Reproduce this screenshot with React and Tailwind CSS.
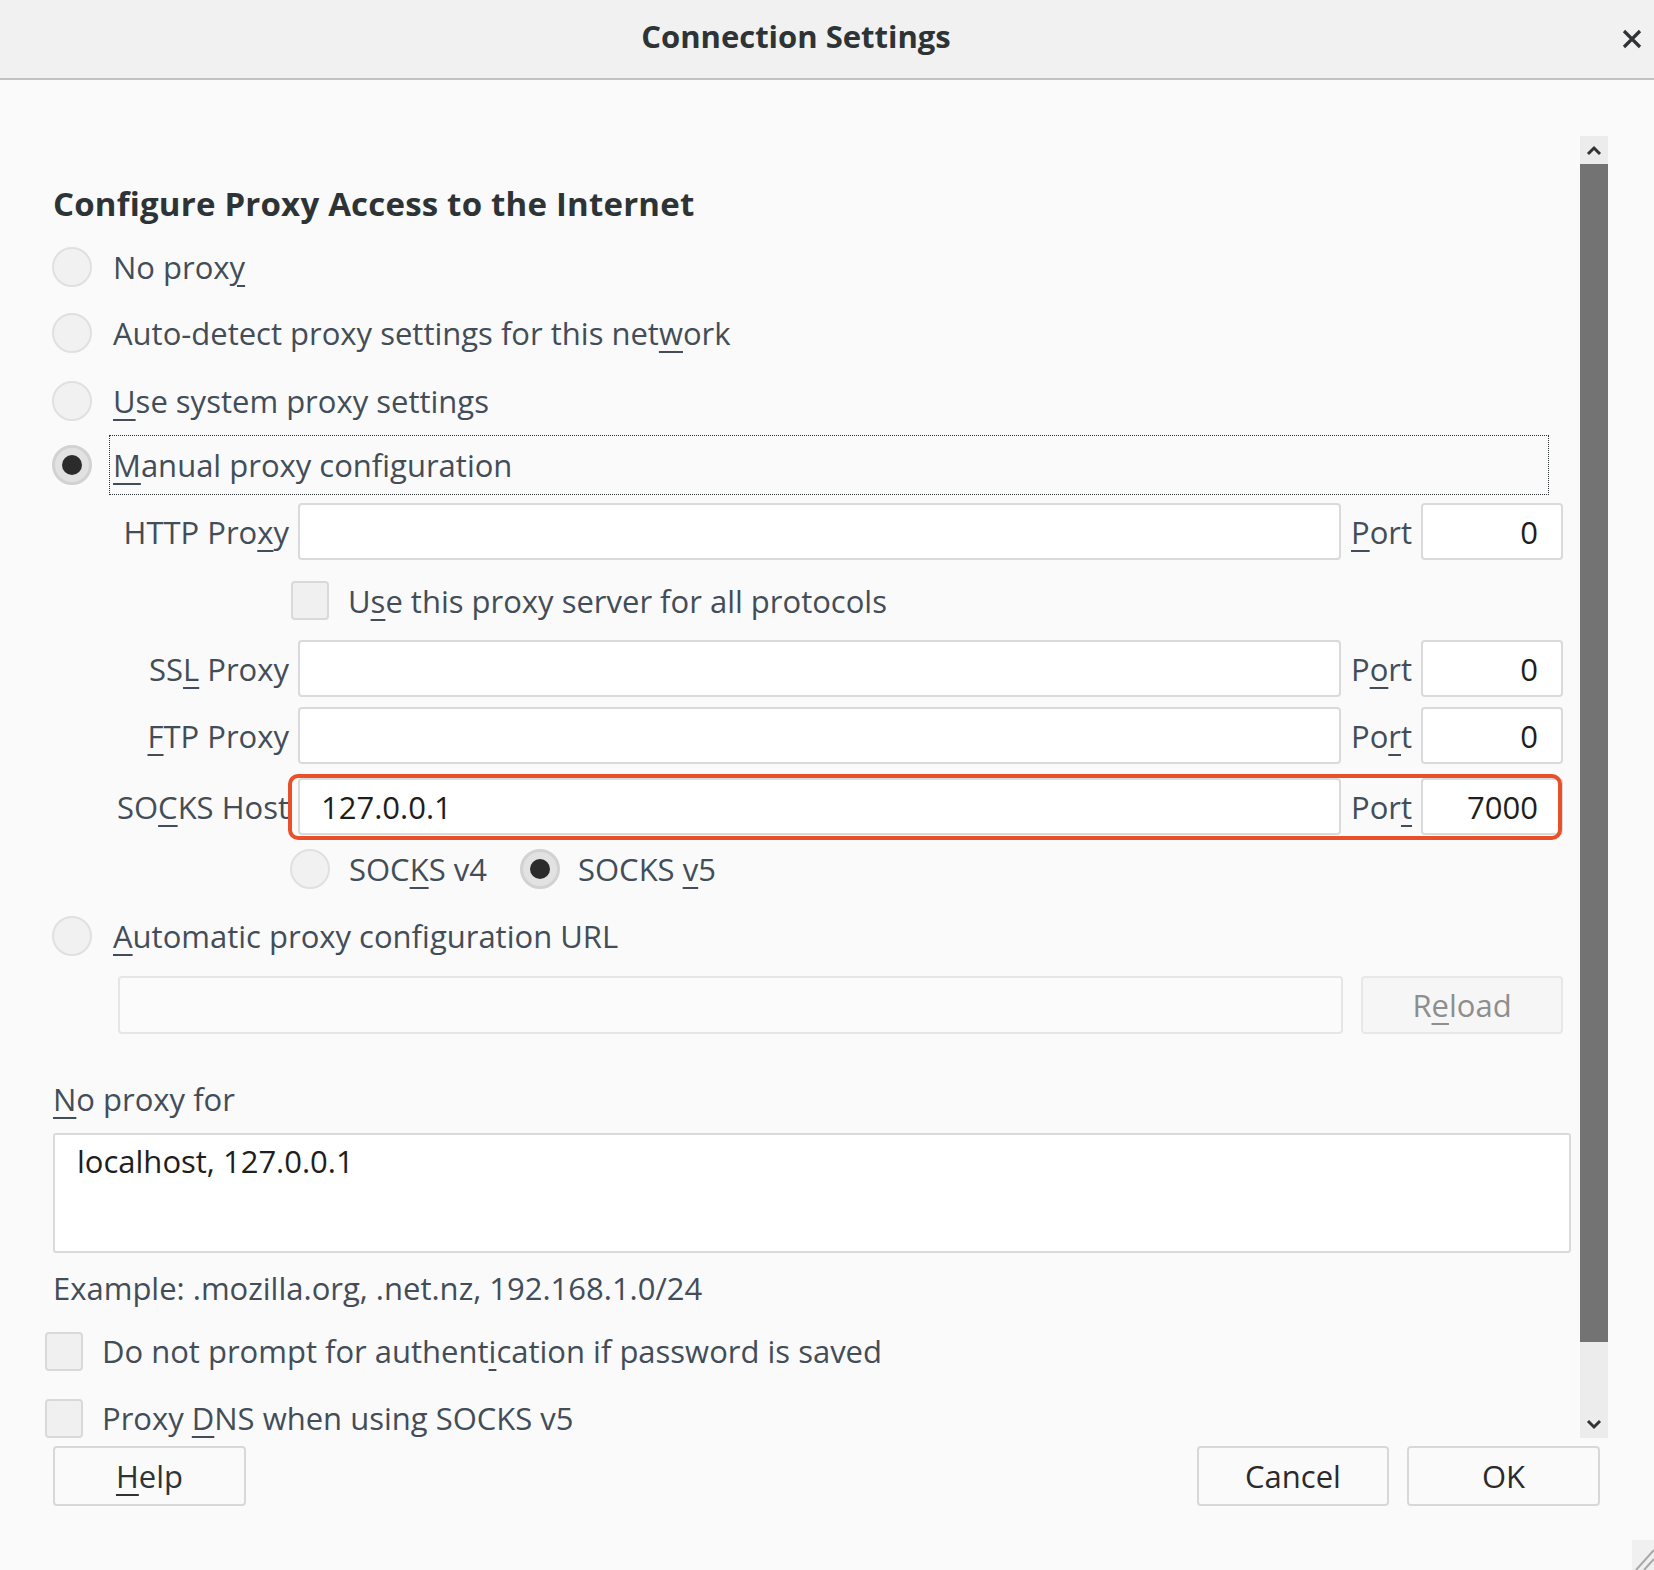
import React from 'react';

// accesskey underline
const U = ({ children }) => (
    <u className="underline decoration-2 underline-offset-[6px]">{children}</u>
);

function Radio({ checked }) {
    if (checked) {
        return (
            <span className="flex h-[40px] w-[40px] shrink-0 items-center justify-center rounded-full border-[3px] border-[#d2d2d2] bg-[#e2e2e2]">
                <span className="h-[20px] w-[20px] rounded-full bg-[#2b2b2b]" />
            </span>
        );
    }
    return <span className="h-[40px] w-[40px] shrink-0 rounded-full border-2 border-[#e0e0e0] bg-[#f1f1f1]" />;
}

function Checkbox() {
    return <span className="h-[39px] w-[38px] shrink-0 rounded-[4px] border-2 border-[#d9d9d9] bg-[#f0f0f0]" />;
}

function RadioRow({ checked, children, className = '' }) {
    return (
        <div className={`flex h-[40px] items-center pl-[52px] ${className}`}>
            <Radio checked={checked} />
            <span className="ml-[21px] whitespace-nowrap">{children}</span>
        </div>
    );
}

function ProxyRow({ label, host, port, portLabel, className = '', children }) {
    return (
        <div className={`relative flex h-[58px] items-stretch ${className}`}>
            <span className="flex w-[289px] items-center justify-end whitespace-nowrap">
                <span>{label}</span>
            </span>
            <span className="ml-[9px] flex w-[1043px] items-center rounded-[4px] border-2 border-[#dadadc] bg-white pl-[21px] text-[#1e1e1e]">
                {host}
            </span>
            <span className="flex w-[80px] items-center pl-[10px]">
                <span>{portLabel}</span>
            </span>
            <span className="flex w-[142px] items-center justify-end rounded-[4px] border-2 border-[#dadadc] bg-white pr-[23px] text-[#1e1e1e]">
                {port}
            </span>
            {children}
        </div>
    );
}

function Chevron({ up }) {
    return (
        <svg width="16" height="12" viewBox="0 0 16 12">
            <path
                d={up ? 'M2 10 L8 4 L14 10' : 'M2 3 L8 9 L14 3'}
                fill="none"
                stroke="#333"
                strokeWidth="3"
            />
        </svg>
    );
}

function Button({ children, className = '', textClass = 'text-[#2e3436]' }) {
    return (
        <div className={`flex h-[60px] items-center justify-center rounded-[4px] border-2 border-[#d8d8da] bg-[#fafafa] ${textClass} ${className}`}>
            {children}
        </div>
    );
}

export default function App() {
    return (
        <div className="relative flex h-[1570px] w-[1654px] flex-col overflow-hidden bg-[#fafafa] font-['Open_Sans',sans-serif] text-[31px] leading-[40px] text-[#434d58]">
            {/* Title bar */}
            <div className="flex h-[80px] shrink-0 items-center border-b-2 border-[#c2c2c2] bg-[#f1f1f1]">
                <div className="flex flex-1 justify-center pb-[6px]">
                    <h1 className="text-[31px] font-bold text-[#2e3436]">Connection Settings</h1>
                </div>
                <div className="flex w-[62px] justify-end pr-[12px]">
                    <svg width="20" height="20" viewBox="0 0 20 20">
                        <path d="M2 2 L18 18 M18 2 L2 18" stroke="#2e3436" strokeWidth="3.2" />
                    </svg>
                </div>
            </div>

            {/* Scroll area */}
            <div className="mt-[56px] flex h-[1302px] shrink-0">
                <div className="flex w-[1580px] flex-col overflow-hidden">
                    <div className="mt-[44px] flex h-[48px] items-center pl-[53px]">
                        <h2 className="text-[33px] font-bold tracking-[0.2px] text-[#2e3436]">
                            Configure Proxy Access to the Internet
                        </h2>
                    </div>

                    <RadioRow className="mt-[20px]">
                        No prox<U>y</U>
                    </RadioRow>
                    <RadioRow className="mt-[26px]">
                        Auto-detect proxy settings for this net<U>w</U>ork
                    </RadioRow>
                    <RadioRow className="mt-[28px]">
                        <U>U</U>se system proxy settings
                    </RadioRow>

                    <div className="mt-[14px] flex h-[60px] items-center pl-[52px]">
                        <Radio checked />
                        <span className="ml-[17px] flex h-[60px] w-[1440px] items-center border border-dotted border-[#2e3436] pl-[3px]">
                            <span>
                                <U>M</U>anual proxy configuration
                            </span>
                        </span>
                    </div>

                    <ProxyRow
                        className="mt-[8px]"
                        label={<>HTTP Pro<U>x</U>y</>}
                        portLabel={<><U>P</U>ort</>}
                        port="0"
                    />

                    <div className="mt-[21px] flex h-[39px] items-center pl-[291px]">
                        <Checkbox />
                        <span className="ml-[19px]">
                            U<U>s</U>e this proxy server for all protocols
                        </span>
                    </div>

                    <ProxyRow
                        className="mt-[20px]"
                        label={<>SS<U>L</U> Proxy</>}
                        portLabel={<>P<U>o</U>rt</>}
                        port="0"
                    />
                    <ProxyRow
                        className="mt-[10px]"
                        label={<><U>F</U>TP Proxy</>}
                        portLabel={<>Po<U>r</U>t</>}
                        port="0"
                    />
                    <ProxyRow
                        className="mt-[14px]"
                        label={<>SO<U>C</U>KS Host</>}
                        portLabel={<>Por<U>t</U></>}
                        host="127.0.0.1"
                        port="7000"
                    >
                        {/* highlight annotation */}
                        <span className="absolute left-[288px] top-[-4px] h-[66px] w-[1274px] rounded-[10px] border-4 border-[#e9502a]" />
                    </ProxyRow>

                    <div className="mt-[14px] flex h-[40px] items-center pl-[290px]">
                        <Radio />
                        <span className="ml-[19px] w-[171px]">
                            SOC<U>K</U>S v4
                        </span>
                        <Radio checked />
                        <span className="ml-[18px]">
                            SOCKS <U>v</U>5
                        </span>
                    </div>

                    <RadioRow className="mt-[27px]">
                        <U>A</U>utomatic proxy configuration URL
                    </RadioRow>

                    <div className="mt-[20px] flex h-[59px] pl-[118px]">
                        <span className="w-[1225px] rounded-[4px] border-2 border-[#e6e6e6] bg-[#fbfbfb]" />
                        <span className="ml-[18px] flex w-[202px] items-center justify-center rounded-[4px] border-2 border-[#e8e8e8] bg-[#f6f6f6] text-[#8e8e8e]">
                            <span>
                                R<U>e</U>load
                            </span>
                        </span>
                    </div>

                    <div className="mt-[45px] flex h-[40px] items-center pl-[53px]">
                        <span>
                            <U>N</U>o proxy for
                        </span>
                    </div>

                    <div className="ml-[53px] mt-[14px] h-[120px] w-[1518px] shrink-0 rounded-[3px] border-2 border-[#dadadc] bg-white pl-[22px] pt-[6px] text-[#1e1e1e]">
                        localhost, 127.0.0.1
                    </div>

                    <div className="mt-[15px] flex h-[40px] items-center pl-[53px]">
                        Example: .mozilla.org, .net.nz, 192.168.1.0/24
                    </div>

                    <div className="mt-[24px] flex h-[39px] shrink-0 items-center pl-[45px]">
                        <Checkbox />
                        <span className="ml-[19px]">
                            Do not prompt for authent<U>i</U>cation if password is saved
                        </span>
                    </div>
                    <div className="mt-[28px] flex h-[39px] shrink-0 items-center pl-[45px]">
                        <Checkbox />
                        <span className="ml-[19px]">
                            Proxy <U>D</U>NS when using SOCKS v5
                        </span>
                    </div>
                </div>

                {/* Scrollbar */}
                <div className="flex w-[28px] flex-col bg-[#ececec]">
                    <div className="flex h-[28px] items-center justify-center">
                        <Chevron up />
                    </div>
                    <div className="h-[1178px] bg-[#737373]" />
                    <div className="flex-1" />
                    <div className="flex h-[28px] items-center justify-center">
                        <Chevron />
                    </div>
                </div>
            </div>

            {/* Dialog buttons */}
            <div className="mt-[8px] flex h-[60px] shrink-0">
                <Button className="ml-[53px] w-[193px]">
                    <span>
                        <U>H</U>elp
                    </span>
                </Button>
                <Button className="ml-[951px] w-[192px]" textClass="text-[#2a2a2a]">
                    Cancel
                </Button>
                <Button className="ml-[18px] w-[193px]" textClass="text-[#2a2a2a]">
                    OK
                </Button>
            </div>

            {/* resize grip */}
            <svg className="absolute bottom-0 right-0" width="22" height="30" viewBox="0 0 22 30">
                <rect x="0" y="0" width="22" height="30" fill="#f0f0f0" />
                <path d="M4 30 L22 10 M12 30 L22 19" stroke="#a8a8a8" strokeWidth="2" />
            </svg>
        </div>
    );
}
